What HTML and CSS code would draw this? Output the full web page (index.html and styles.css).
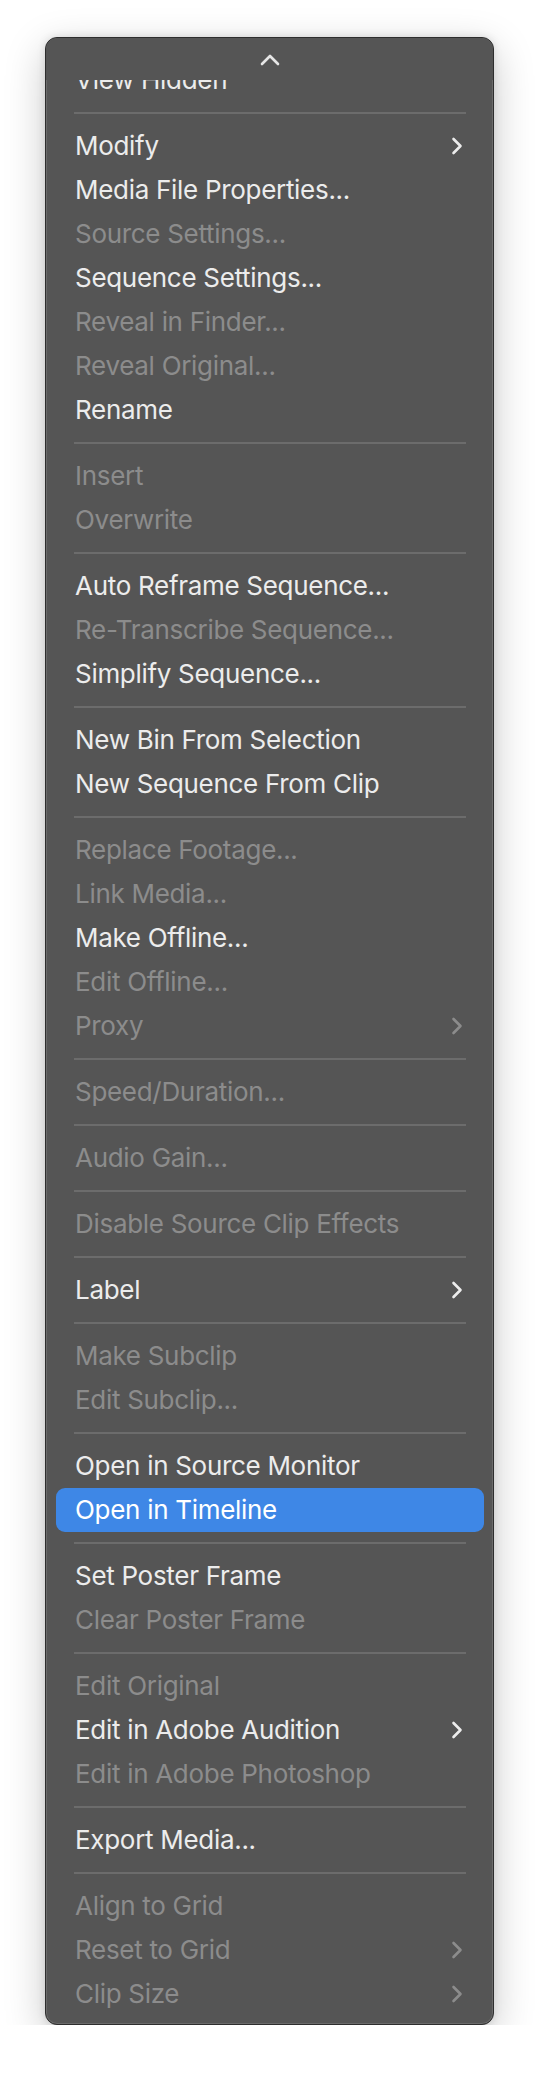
FILE: index.html
```html
<!DOCTYPE html>
<html>
<head>
<meta charset="utf-8">
<link rel="stylesheet" href="styles.css">
</head>
<body>
<div class="page">
  <div class="menu">
    <div class="scroll-up">
      <svg class="caret" width="20" height="12" viewBox="0 0 20 12"><path d="M2 10 L10 2 L18 10" fill="none" stroke="#e6e6e6" stroke-width="2.6" stroke-linecap="round" stroke-linejoin="round"/></svg>
    </div>
    <div class="viewport">
      <ul class="list">
        <li class="item">View Hidden</li>
        <li class="sep"></li>
        <li class="item">Modify<svg class="chev" viewBox="0 0 12 18"><path d="M2.5 2 L9.5 9 L2.5 16" fill="none" stroke="currentColor" stroke-width="2.6" stroke-linecap="round" stroke-linejoin="round"/></svg></li>
        <li class="item">Media File Properties...</li>
        <li class="item off">Source Settings...</li>
        <li class="item">Sequence Settings...</li>
        <li class="item off">Reveal in Finder...</li>
        <li class="item off">Reveal Original...</li>
        <li class="item">Rename</li>
        <li class="sep"></li>
        <li class="item off">Insert</li>
        <li class="item off">Overwrite</li>
        <li class="sep"></li>
        <li class="item">Auto Reframe Sequence...</li>
        <li class="item off">Re-Transcribe Sequence...</li>
        <li class="item">Simplify Sequence...</li>
        <li class="sep"></li>
        <li class="item">New Bin From Selection</li>
        <li class="item">New Sequence From Clip</li>
        <li class="sep"></li>
        <li class="item off">Replace Footage...</li>
        <li class="item off">Link Media...</li>
        <li class="item">Make Offline...</li>
        <li class="item off">Edit Offline...</li>
        <li class="item off">Proxy<svg class="chev" viewBox="0 0 12 18"><path d="M2.5 2 L9.5 9 L2.5 16" fill="none" stroke="currentColor" stroke-width="2.6" stroke-linecap="round" stroke-linejoin="round"/></svg></li>
        <li class="sep"></li>
        <li class="item off">Speed/Duration...</li>
        <li class="sep"></li>
        <li class="item off">Audio Gain...</li>
        <li class="sep"></li>
        <li class="item off">Disable Source Clip Effects</li>
        <li class="sep"></li>
        <li class="item">Label<svg class="chev" viewBox="0 0 12 18"><path d="M2.5 2 L9.5 9 L2.5 16" fill="none" stroke="currentColor" stroke-width="2.6" stroke-linecap="round" stroke-linejoin="round"/></svg></li>
        <li class="sep"></li>
        <li class="item off">Make Subclip</li>
        <li class="item off">Edit Subclip...</li>
        <li class="sep"></li>
        <li class="item">Open in Source Monitor</li>
        <li class="item active">Open in Timeline</li>
        <li class="sep"></li>
        <li class="item">Set Poster Frame</li>
        <li class="item off">Clear Poster Frame</li>
        <li class="sep"></li>
        <li class="item off">Edit Original</li>
        <li class="item">Edit in Adobe Audition<svg class="chev" viewBox="0 0 12 18"><path d="M2.5 2 L9.5 9 L2.5 16" fill="none" stroke="currentColor" stroke-width="2.6" stroke-linecap="round" stroke-linejoin="round"/></svg></li>
        <li class="item off">Edit in Adobe Photoshop</li>
        <li class="sep"></li>
        <li class="item">Export Media...</li>
        <li class="sep"></li>
        <li class="item off">Align to Grid</li>
        <li class="item off">Reset to Grid<svg class="chev" viewBox="0 0 12 18"><path d="M2.5 2 L9.5 9 L2.5 16" fill="none" stroke="currentColor" stroke-width="2.6" stroke-linecap="round" stroke-linejoin="round"/></svg></li>
        <li class="item off">Clip Size<svg class="chev" viewBox="0 0 12 18"><path d="M2.5 2 L9.5 9 L2.5 16" fill="none" stroke="currentColor" stroke-width="2.6" stroke-linecap="round" stroke-linejoin="round"/></svg></li>
      </ul>
    </div>
  </div>
</div>
</body>
</html>
```
FILE: styles.css
```css
html, body {
  margin: 0;
  padding: 0;
  background: #ffffff;
}
.page {
  padding: 37px 46px 0 45px;
  font-family: Inter, "Noto Sans", "Liberation Sans", sans-serif;
}
.menu {
  width: 447px;
  background: #555555;
  border: 1px solid #2e2e2e;
  border-radius: 12px;
  box-shadow: inset 0 0 0 1px #6a6a6a, 0 12px 40px rgba(0, 0, 0, 0.22), 0 0 8px rgba(0, 0, 0, 0.12);
  overflow: hidden;
  padding-bottom: 8px;
}
.scroll-up {
  height: 42px;
  display: flex;
  justify-content: center;
  align-items: flex-start;
  position: relative;
  z-index: 1;
  background: #555555;
  border-radius: 11px 11px 0 0;
}
.caret {
  margin-top: 16px;
}
.viewport {
  overflow: hidden;
}
.list {
  list-style: none;
  margin: -22px 0 0 0;
  padding: 0;
}
.item {
  height: 44px;
  margin: 0 9px 0 10px;
  padding: 0 21px 0 19px;
  display: flex;
  align-items: center;
  justify-content: space-between;
  font-size: 26px;
  line-height: 44px;
  letter-spacing: -0.3px;
  color: #ececec;
  border-radius: 9px;
  white-space: nowrap;
}
.item.off {
  color: #8c8c8c;
}
.item.active {
  background: #3e87e6;
  color: #ffffff;
}
.chev {
  width: 12px;
  height: 18px;
  flex: none;
}
.sep {
  height: 22px;
  margin: 0 27px 0 28px;
  display: flex;
  align-items: center;
}
.sep::before {
  content: "";
  display: block;
  width: 100%;
  height: 2px;
  background: #6c6c6c;
}
```
